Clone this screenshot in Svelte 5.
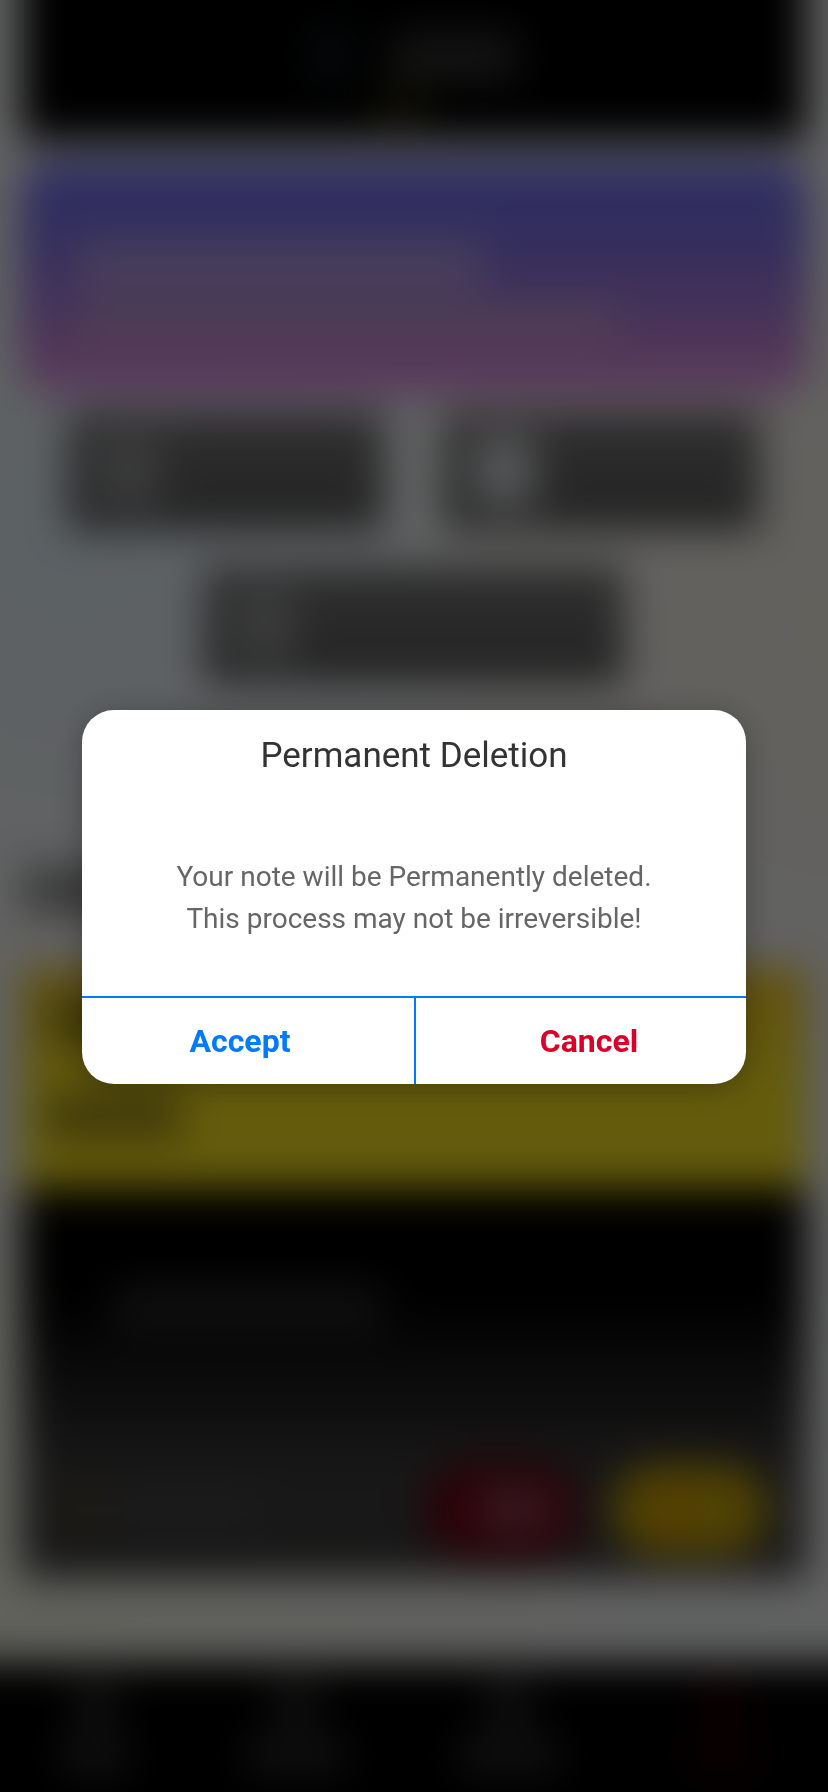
<script>
  let open = $state(true);
  const close = () => (open = false);
</script>

<div class="shell">
  <div class="page" class:blurred={open} aria-hidden="true">
    <div class="top">
      <span class="logo"></span>
      <span class="brand"></span>
      <span class="accent"></span>
    </div>

    <div class="welcome">
      <span class="bar wide"></span>
      <span class="bar wider"></span>
    </div>

    <div class="actions">
      <div class="action"><span class="glyph low"></span></div>
      <div class="action"><span class="glyph high"></span></div>
      <div class="action long"><span class="glyph low"></span></div>
    </div>

    <div class="heading"></div>

    <div class="note">
      <div class="note-head">
        <span class="ink"></span>
        <span class="ink"></span>
      </div>
      <div class="note-body">
        <span class="line"></span>
        <div class="note-foot">
          <span class="dot"></span>
          <span class="date"></span>
          <span class="pill red"><i></i></span>
          <span class="pill gold"><i></i></span>
        </div>
      </div>
    </div>

    <div class="nav">
      <div class="tab narrow"><i></i><b></b></div>
      <div class="tab"><i></i><b></b></div>
      <div class="tab"><i></i><b></b></div>
      <div class="tab active"><i></i><b></b></div>
    </div>
  </div>
</div>

{#if open}
  <div class="overlay">
    <div
      class="dialog"
      role="alertdialog"
      aria-modal="true"
      aria-labelledby="dialog-title"
      aria-describedby="dialog-text"
    >
      <h1 id="dialog-title">Permanent Deletion</h1>
      <p id="dialog-text">
        Your note will be Permanently deleted.<br />This process may not be irreversible!
      </p>
      <div class="buttons">
        <button type="button" class="accept" onclick={close}>Accept</button>
        <button type="button" class="cancel" onclick={close}>Cancel</button>
      </div>
    </div>
  </div>
{/if}

<style>
  :global(body) {
    background: #fff;
    font-family: Roboto, "Liberation Sans", sans-serif;
  }

  .shell {
    overflow: hidden;
    min-height: 100vh;
  }

  /* The page bleeds past the window so that its blur has no faded rim. */
  .page {
    --bleed: 60px;
    box-sizing: border-box;
    display: flex;
    flex-direction: column;
    min-height: calc(100vh + 2 * var(--bleed));
    margin: calc(-1 * var(--bleed));
    padding: 0 var(--bleed);
    background:
      radial-gradient(circle at 14% 31%, #e4f2fb, transparent 26%),
      radial-gradient(circle at 94% 36%, #f5f2e6, transparent 30%),
      radial-gradient(circle at 0% 84%, #f4f5e4, transparent 40%),
      #f4f5f6;
  }
  .blurred {
    filter: blur(20px);
  }

  .top {
    display: flex;
    justify-content: center;
    align-items: center;
    gap: 40px;
    position: relative;
    height: 140px;
    margin: 0 22px 20px;
    padding-top: var(--bleed);
    background: #000;
  }
  .logo {
    width: 40px;
    height: 60px;
    margin-bottom: 28px;
    background: #10191c;
  }
  .brand {
    width: 128px;
    height: 48px;
    margin-bottom: 26px;
    background: #343434;
  }
  .accent {
    position: absolute;
    bottom: 16px;
    left: 45%;
    width: 50px;
    height: 32px;
    background: #2e2b08;
  }

  .welcome {
    display: flex;
    flex-direction: column;
    gap: 16px;
    box-sizing: border-box;
    height: 236px;
    margin: 0 20px 16px;
    padding: 80px 56px 0;
    border-radius: 32px;
    background: linear-gradient(#7676f6, #7f72e8 34%, #c083d8 76%, #ea9cec);
  }
  .bar {
    height: 48px;
    background: rgba(228, 218, 225, 0.42);
  }
  .wide {
    width: 60%;
  }
  .wider {
    width: 80%;
    height: 36px;
    background: rgba(232, 210, 200, 0.34);
  }

  .actions {
    display: flex;
    flex-wrap: wrap;
    justify-content: center;
    gap: 36px 60px;
    margin: 0 20px;
  }
  .action {
    display: flex;
    align-items: center;
    box-sizing: border-box;
    width: 316px;
    height: 118px;
    padding: 0 28px;
    background: linear-gradient(#767676, #565656);
  }
  .long {
    width: 420px;
  }
  .glyph {
    width: 64px;
    height: 72px;
  }
  .low {
    background: #949597;
  }
  .high {
    background: #d6d8dc;
  }

  .heading {
    width: 160px;
    height: 44px;
    margin: 184px 24px 56px;
    background: #888;
  }

  .note {
    margin: 0 22px 84px;
  }
  .note-head {
    display: flex;
    flex-direction: column;
    gap: 48px;
    box-sizing: border-box;
    height: 220px;
    padding: 28px 24px;
    background: linear-gradient(#f6c826, #fae51e 55%);
  }
  .ink {
    width: 136px;
    height: 48px;
    background: #a08e18;
  }
  .note-body {
    display: flex;
    flex-direction: column;
    justify-content: space-between;
    box-sizing: border-box;
    height: 390px;
    padding: 96px 38px 22px 44px;
    background: linear-gradient(#000 28%, #3c3c3c 72%);
  }
  .line {
    width: 270px;
    height: 48px;
    margin-left: 48px;
    background: #262626;
  }
  .note-foot {
    display: flex;
    align-items: center;
    gap: 16px;
  }
  .dot {
    width: 28px;
    height: 32px;
    background: #5a4a20;
  }
  .date {
    width: 150px;
    height: 32px;
    background: #464646;
  }
  .pill {
    display: flex;
    align-items: center;
    justify-content: center;
    width: 156px;
    height: 92px;
    border-radius: 46px;
  }
  .pill i {
    width: 76px;
    height: 40px;
  }
  .red {
    margin-left: auto;
    background: #6c000f;
  }
  .red i {
    margin-left: 24px;
    background: #8c4858;
  }
  .gold {
    margin-left: 16px;
    background: #c8a60a;
  }
  .gold i {
    width: 32px;
    margin-right: 32px;
    background: #dc9600;
  }

  .nav {
    display: grid;
    grid-template-columns: 190px repeat(3, 1fr);
    flex: 1;
    margin: 0 calc(-1 * var(--bleed));
    padding: 0 var(--bleed) var(--bleed);
    background: #000;
  }
  .tab {
    display: flex;
    flex-direction: column;
    align-items: center;
    gap: 12px;
    padding-top: 20px;
  }
  .tab i {
    width: 44px;
    height: 44px;
    background: #2c2c2c;
  }
  .tab b {
    width: 104px;
    height: 36px;
    background: #2a2a2a;
  }
  .narrow b {
    width: 72px;
  }
  .active i {
    background: #240000;
  }
  .active b {
    width: 72px;
    background: #200000;
  }

  .overlay {
    position: fixed;
    inset: 0;
    display: flex;
    align-items: center;
    padding: 2px 82px 0;
    background: rgba(0, 0, 0, 0.6);
  }

  .dialog {
    flex: 1;
    overflow: hidden;
    border-radius: 32px;
    background: #fff;
    box-shadow: 0 4px 32px rgba(0, 0, 0, 0.3);
    text-align: center;
  }
  h1 {
    margin: 0;
    padding: 24px 24px 0;
    color: #333;
    font-size: 35px;
    font-weight: 400;
    line-height: 44px;
  }
  p {
    margin: 0;
    padding: 78px 24px 56px;
    color: #666;
    font-size: 28px;
    line-height: 42px;
  }
  .buttons {
    display: grid;
    grid-template-columns: 1fr 1fr;
    border-top: 2px solid #007aff;
  }
  button {
    height: 86px;
    margin: 0;
    padding: 0;
    border: 0;
    background: none;
    font: 700 32px/40px Roboto, "Liberation Sans", sans-serif;
    cursor: pointer;
  }
  .accept {
    padding-right: 16px;
    color: #007aff;
  }
  .cancel {
    padding-left: 16px;
    border-left: 2px solid #007aff;
    color: #dc0028;
  }
</style>
